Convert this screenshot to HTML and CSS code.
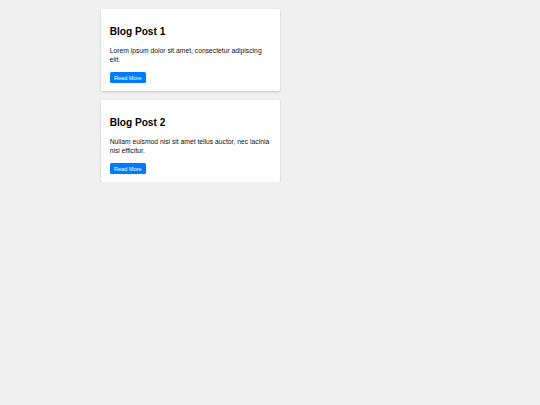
FILE: index.html
```
<!DOCTYPE html>
<html lang="en">
<head>
<meta charset="utf-8">
<title>Blog</title>
<link rel="stylesheet" href="styles.css">
</head>
<body>
<main class="posts">
  <article class="card">
    <h2 class="card-title">Blog Post 1</h2>
    <p class="card-text">Lorem ipsum dolor sit amet, consectetur adipiscing elit.</p>
    <button class="btn">Read More</button>
  </article>
  <article class="card">
    <h2 class="card-title">Blog Post 2</h2>
    <p class="card-text">Nullam euismod nisi sit amet tellus auctor, nec lacinia nisi efficitur.</p>
    <button class="btn">Read More</button>
  </article>
</main>
</body>
</html>
```
FILE: styles.css
```
html, body {
  margin: 0;
  padding: 0;
  background: #f0f0f0;
  font-family: "Liberation Sans", Arial, sans-serif;
  color: #000;
}
.posts {
  display: flex;
  flex-direction: column;
  gap: 8.3px;
  width: 179px;
  padding: 8.7px 0 0 101.3px;
}
.card {
  box-sizing: border-box;
  width: 179px;
  background: #fff;
  border-radius: 2px;
  box-shadow: 0 1px 2.5px rgba(0, 0, 0, 0.18);
  padding: 8.4px;
  display: flex;
  flex-direction: column;
  align-items: flex-start;
}
.card-title {
  font-size: 10.125px;
  font-weight: bold;
  line-height: normal;
  margin: 9.2px 0 8.4px;
}
.card-text {
  font-size: 6.75px;
  line-height: 9.2px;
  margin: 0 0 8.2px;
  color: #111;
}
.btn {
  font-family: "Liberation Sans", Arial, sans-serif;
  font-size: 5.625px;
  line-height: normal;
  background: #007bff;
  color: #fff;
  border: none;
  border-radius: 1.5px;
  padding: 2.4px 4.2px;
  margin: 0;
}
```
